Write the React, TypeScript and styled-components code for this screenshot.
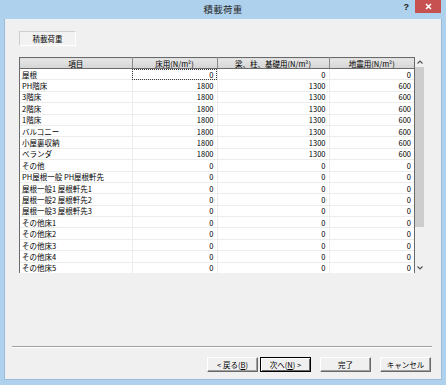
import React from 'react';
import styled, { createGlobalStyle } from 'styled-components';

const GlobalStyle = createGlobalStyle`
  html, body {
    margin: 0;
    padding: 0;
    background: #ffffff;
  }
  * {
    box-sizing: border-box;
  }
`;

const FONT = `"Noto Sans CJK JP", "Noto Sans", sans-serif`;

const Frame = styled.div`
  width: 446px;
  height: 385px;
  background: #aed1ee;
  display: flex;
  flex-direction: column;
  padding: 0 4px 5px 4px;
  font-family: ${FONT};
  color: #000;
`;

const TitleBar = styled.div`
  height: 19px;
  display: grid;
  grid-template-columns: 1fr auto 1fr;
  align-items: start;
`;

const Title = styled.div`
  grid-column: 2;
  font-size: 9.5px;
  line-height: 19px;
  color: #2a2a2a;
  letter-spacing: 0.3px;
`;

const TitleButtons = styled.div`
  grid-column: 3;
  justify-self: end;
  display: flex;
  align-items: flex-start;
  gap: 6px;
`;

const HelpGlyph = styled.span`
  font-family: "Liberation Sans", sans-serif;
  font-weight: bold;
  font-size: 9px;
  line-height: 14px;
  color: #1a1a1a;
`;

const CloseButton = styled.div`
  width: 26px;
  height: 13px;
  background: #c75050;
  display: flex;
  align-items: center;
  justify-content: center;
  margin-right: 1px;
`;

const Client = styled.div`
  flex: 1;
  background: #f0f0f0;
  border: 1px solid #9bbcd8;
  border-top: none;
  display: flex;
  flex-direction: column;
  padding: 12px 0 7px 0;
`;

const SectionTab = styled.div`
  margin-left: 14px;
  width: 57px;
  height: 15px;
  border: 1px solid;
  border-color: #cfcfcf #ffffff #ffffff #cfcfcf;
  background: #f2f2f2;
  font-size: 7.5px;
  line-height: 13px;
  text-align: center;
`;

const GridArea = styled.div`
  margin: 11px 0 0 14px;
  height: 216px;
  display: flex;
`;

const TableBox = styled.div`
  width: 396px;
  height: 216px;
  background: #ffffff;
  border-left: 1px solid #6a6a6a;
  border-right: 1px solid #6a6a6a;
  overflow: hidden;
`;

const DataTable = styled.table`
  width: 100%;
  border-collapse: collapse;
  table-layout: fixed;
  font-size: 7.5px;
`;

const HeadRow = styled.tr`
  height: 11px;
`;

const BodyRow = styled.tr`
  height: 11.4px;
`;

const HeaderCell = styled.th<{ $w: number; $last?: boolean }>`
  width: ${p => p.$w}px;
  padding: 0;
  background: linear-gradient(#e6e6e6, #d5d5d5);
  border-top: 1px solid #6a6a6a;
  border-bottom: 1px solid #6a6a6a;
  border-right: ${p => (p.$last ? 'none' : '1px solid #8a8a8a')};
  color: #000;
  font-weight: normal;
  font-size: 7.5px;
  line-height: 9px;
  text-align: center;
  white-space: nowrap;
  overflow: hidden;
`;

const Cell = styled.td<{ $align: 'left' | 'right'; $focus?: boolean; $last?: boolean }>`
  border-bottom: 1px solid #ececec;
  border-right: ${p => (p.$last ? 'none' : '1px solid #ececec')};
  color: #000;
  font-size: 7.5px;
  line-height: 9px;
  padding: 0 3px 0 2px;
  text-align: ${p => p.$align};
  white-space: nowrap;
  overflow: hidden;
  outline: ${p => (p.$focus ? '1px dotted #3a3a3a' : 'none')};
  outline-offset: -1px;
`;

const ScrollBar = styled.div`
  width: 10px;
  display: flex;
  flex-direction: column;
`;

const ScrollArrow = styled.div`
  height: 10px;
  display: flex;
  align-items: center;
  justify-content: center;
`;

const ScrollTrack = styled.div`
  flex: 1;
  display: flex;
  flex-direction: column;
`;

const ScrollThumb = styled.div`
  width: 9px;
  height: 160px;
  background: #cdcdcd;
`;

const Separator = styled.div`
  margin: auto 9px 0 7px;
  height: 2px;
  border-top: 1px solid #a0a0a0;
  border-bottom: 1px solid #ffffff;
`;

const ButtonRow = styled.div`
  margin-top: 9px;
  padding-right: 10px;
  display: flex;
  justify-content: flex-end;
`;

const DialogButton = styled.div<{ $default?: boolean; $gap: number }>`
  width: 51px;
  height: 15px;
  margin-left: ${p => p.$gap}px;
  background: #f0f0f0;
  border: 1px solid;
  border-color: ${p => (p.$default ? '#000 #000 #000 #000' : '#ffffff #696969 #696969 #ffffff')};
  box-shadow: ${p =>
    p.$default
      ? 'inset 1px 1px #ffffff, inset -1px -1px #696969'
      : 'inset -1px -1px #a0a0a0'};
  color: #000;
  font-size: 7.5px;
  line-height: 13px;
  text-align: center;
  white-space: nowrap;
`;

type Row = [string, string, string, string];

const full: Row[] = ['PH階床', '3階床', '2階床', '1階床', 'バルコニー', '小屋裏収納', 'ベランダ'].map(
  n => [n, '1800', '1300', '600'] as Row
);

const zeros = [
  'その他',
  'PH屋根一般 PH屋根軒先',
  '屋根一般1 屋根軒先1',
  '屋根一般2 屋根軒先2',
  '屋根一般3 屋根軒先3',
  'その他床1',
  'その他床2',
  'その他床3',
  'その他床4',
  'その他床5',
].map(n => [n, '0', '0', '0'] as Row);

const rows: Row[] = [['屋根', '0', '0', '0'], ...full, ...zeros];

const headers: [string, number][] = [
  ['項目', 112],
  ['床用(N/m²)', 85],
  ['梁、柱、基礎用(N/m²)', 112],
  ['地震用(N/m²)', 85],
];

const Chevron: React.FC<{ down?: boolean }> = ({ down }) => (
  <svg width="8" height="6" viewBox="0 0 8 6">
    <polyline
      points={down ? '1.5,1.5 4,4 6.5,1.5' : '1.5,4.5 4,2 6.5,4.5'}
      fill="none"
      stroke="#555"
      strokeWidth="1.2"
    />
  </svg>
);

const App: React.FC = () => {
  return (
    <>
      <GlobalStyle />
      <Frame>
        <TitleBar>
          <Title>積載荷重</Title>
          <TitleButtons>
            <HelpGlyph>?</HelpGlyph>
            <CloseButton>
              <svg width="7" height="7" viewBox="0 0 7 7">
                <path d="M1 1 L6 6 M6 1 L1 6" stroke="#fff" strokeWidth="1.6" />
              </svg>
            </CloseButton>
          </TitleButtons>
        </TitleBar>

        <Client>
          <SectionTab>積載荷重</SectionTab>

          <GridArea>
            <TableBox>
              <DataTable>
                <thead>
                  <HeadRow>
                    {headers.map(([h, w], i) => (
                      <HeaderCell key={h} $w={w} $last={i === headers.length - 1}>
                        {h}
                      </HeaderCell>
                    ))}
                  </HeadRow>
                </thead>
                <tbody>
                  {rows.map((r, ri) => (
                    <BodyRow key={ri}>
                      {r.map((v, ci) => (
                        <Cell
                          key={ci}
                          $align={ci === 0 ? 'left' : 'right'}
                          $focus={ri === 0 && ci === 1}
                          $last={ci === r.length - 1}
                        >
                          {v}
                        </Cell>
                      ))}
                    </BodyRow>
                  ))}
                </tbody>
              </DataTable>
            </TableBox>
            <ScrollBar>
              <ScrollArrow>
                <Chevron />
              </ScrollArrow>
              <ScrollTrack>
                <ScrollThumb />
              </ScrollTrack>
              <ScrollArrow>
                <Chevron down />
              </ScrollArrow>
            </ScrollBar>
          </GridArea>

          <Separator />

          <ButtonRow>
            <DialogButton $gap={0}>
              &lt; 戻る(<u>B</u>)
            </DialogButton>
            <DialogButton $gap={2} $default>
              次へ(<u>N</u>) &gt;
            </DialogButton>
            <DialogButton $gap={9}>完了</DialogButton>
            <DialogButton $gap={9}>キャンセル</DialogButton>
          </ButtonRow>
        </Client>
      </Frame>
    </>
  );
};

export default App;
